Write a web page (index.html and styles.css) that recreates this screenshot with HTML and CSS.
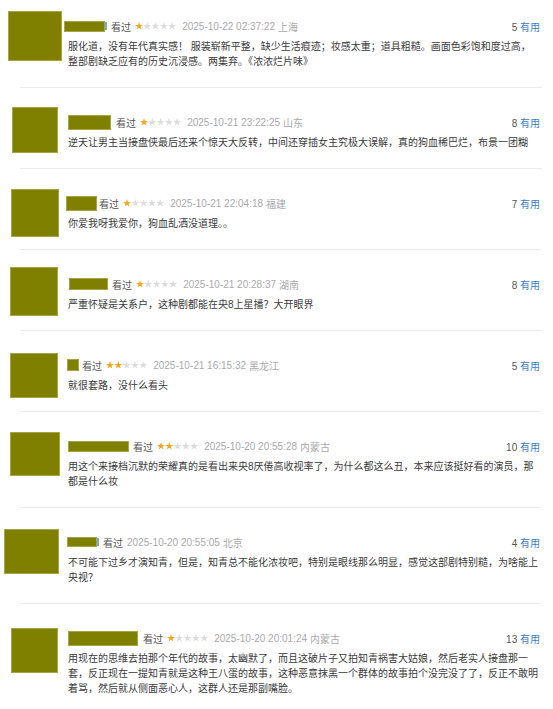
FILE: index.html
```html
<!DOCTYPE html>
<html lang="zh-CN">
<head>
  <meta charset="UTF-8">
  <title>短评</title>
  <link rel="stylesheet" href="styles.css">
</head>
<body>
  <div class="list">

    <div class="review">
      <div class="row">
        <div class="avatar-cell"><div class="avatar"></div></div>
        <div class="body">
          <div class="meta">
            <span class="name"></span><span class="tail"></span>
            <span class="status">看过</span>
            <span class="stars s1"><i></i><i></i><i></i><i></i><i></i></span>
            <span class="time">2025-10-22 02:37:22</span>
            <span class="loc">上海</span>
            <span class="votes"><b>5</b> <a>有用</a></span>
          </div>
          <p class="text">服化道，没有年代真实感！ 服装崭新平整，缺少生活痕迹；妆感太重；道具粗糙。画面色彩饱和度过高，<br>整部剧缺乏应有的历史沉浸感。两集弃。《浓浓烂片味》</p>
        </div>
      </div>
    </div>

    <div class="review">
      <div class="row">
        <div class="avatar-cell"><div class="avatar"></div></div>
        <div class="body">
          <div class="meta">
            <span class="name"></span>
            <span class="status">看过</span>
            <span class="stars s1"><i></i><i></i><i></i><i></i><i></i></span>
            <span class="time">2025-10-21 23:22:25</span>
            <span class="loc">山东</span>
            <span class="votes"><b>8</b> <a>有用</a></span>
          </div>
          <p class="text">逆天让男主当接盘侠最后还来个惊天大反转，中间还穿插女主究极大误解，真的狗血稀巴烂，布景一团糊</p>
        </div>
      </div>
    </div>

    <div class="review">
      <div class="row">
        <div class="avatar-cell"><div class="avatar"></div></div>
        <div class="body">
          <div class="meta">
            <span class="name"></span>
            <span class="status">看过</span>
            <span class="stars s1"><i></i><i></i><i></i><i></i><i></i></span>
            <span class="time">2025-10-21 22:04:18</span>
            <span class="loc">福建</span>
            <span class="votes"><b>7</b> <a>有用</a></span>
          </div>
          <p class="text">你爱我呀我爱你，狗血乱洒没道理。。</p>
        </div>
      </div>
    </div>

    <div class="review">
      <div class="row">
        <div class="avatar-cell"><div class="avatar"></div></div>
        <div class="body">
          <div class="meta">
            <span class="name"></span>
            <span class="status">看过</span>
            <span class="stars s1"><i></i><i></i><i></i><i></i><i></i></span>
            <span class="time">2025-10-21 20:28:37</span>
            <span class="loc">湖南</span>
            <span class="votes"><b>8</b> <a>有用</a></span>
          </div>
          <p class="text">严重怀疑是关系户，这种剧都能在央8上星播？大开眼界</p>
        </div>
      </div>
    </div>

    <div class="review">
      <div class="row">
        <div class="avatar-cell"><div class="avatar"></div></div>
        <div class="body">
          <div class="meta">
            <span class="name"></span>
            <span class="status">看过</span>
            <span class="stars s2"><i></i><i></i><i></i><i></i><i></i></span>
            <span class="time">2025-10-21 16:15:32</span>
            <span class="loc">黑龙江</span>
            <span class="votes"><b>5</b> <a>有用</a></span>
          </div>
          <p class="text">就很套路，没什么看头</p>
        </div>
      </div>
    </div>

    <div class="review">
      <div class="row">
        <div class="avatar-cell"><div class="avatar"></div></div>
        <div class="body">
          <div class="meta">
            <span class="name"></span>
            <span class="status">看过</span>
            <span class="stars s2"><i></i><i></i><i></i><i></i><i></i></span>
            <span class="time">2025-10-20 20:55:28</span>
            <span class="loc">内蒙古</span>
            <span class="votes"><b>10</b> <a>有用</a></span>
          </div>
          <p class="text">用这个来接档沉默的荣耀真的是看出来央8厌倦高收视率了，为什么都这么丑，本来应该挺好看的演员，那<br>都是什么妆</p>
        </div>
      </div>
    </div>

    <div class="review">
      <div class="row">
        <div class="avatar-cell"><div class="avatar"></div></div>
        <div class="body">
          <div class="meta">
            <span class="name"></span><span class="tail"></span>
            <span class="status">看过</span>
            <span class="time">2025-10-20 20:55:05</span>
            <span class="loc">北京</span>
            <span class="votes"><b>4</b> <a>有用</a></span>
          </div>
          <p class="text">不可能下过乡才演知青，但是，知青总不能化浓妆吧，特别是眼线那么明显，感觉这部剧特别糙，为啥能上<br>央视？</p>
        </div>
      </div>
    </div>

    <div class="review">
      <div class="row">
        <div class="avatar-cell"><div class="avatar"></div></div>
        <div class="body">
          <div class="meta">
            <span class="name"></span>
            <span class="status">看过</span>
            <span class="stars s1"><i></i><i></i><i></i><i></i><i></i></span>
            <span class="time">2025-10-20 20:01:24</span>
            <span class="loc">内蒙古</span>
            <span class="votes"><b>13</b> <a>有用</a></span>
          </div>
          <p class="text">用现在的思维去拍那个年代的故事，太幽默了，而且这破片子又拍知青祸害大姑娘，然后老实人接盘那一<br>套，反正现在一提知青就是这种王八蛋的故事，这种恶意抹黑一个群体的故事拍个没完没了了，反正不敢明<br>着骂，然后就从侧面恶心人，这群人还是那副嘴脸。</p>
        </div>
      </div>
    </div>

  </div>
</body>
</html>
```

FILE: styles.css
```css
body {
  margin: 0;
  background: #fff;
  font-family: "Liberation Sans", "Noto Sans CJK SC", sans-serif;
  font-size: 10px;
  color: #3b3b3b;
  overflow: hidden;
}
.list {
  margin-top: -8px;
}
.review::after {
  content: "";
  display: block;
  height: 1px;
  margin: 0 11px 0 20px;
  background: #ececec;
}
.row {
  display: flex;
}
.avatar-cell {
  width: 68px;
  height: 62px;
  flex-shrink: 0;
}
.avatar {
  background: #808000;
  box-shadow: inset 0 0 0 1px #a6a646;
}
.body {
  flex: 1;
  padding: 26px 13px 18px 0;
  min-width: 0;
}
.meta {
  display: flex;
  align-items: center;
  height: 16px;
  white-space: nowrap;
}
.name {
  display: inline-block;
  background: #808000;
  box-shadow: inset 0 0 0 1px #a6a646;
  margin-right: 4px;
}
.tail {
  display: inline-block;
  width: 2px;
  height: 8px;
  margin: 0 4px 0 -4px;
  background: #7fa6cf;
}
.status {
  color: #555;
  margin-right: 4px;
}
.stars {
  display: inline-flex;
  gap: 0.3px;
  margin-right: 6px;
}
.stars i {
  display: block;
  width: 8px;
  height: 8px;
  background: #dcdcdc;
  clip-path: polygon(50% 0%, 62% 36%, 100% 36%, 69% 58%, 81% 95%, 50% 72%, 19% 95%, 31% 58%, 0% 36%, 38% 36%);
}
.s1 i:nth-child(-n+1),
.s2 i:nth-child(-n+2) {
  background: #f9a31a;
}
.time,
.loc {
  color: #aaa;
}
.loc {
  margin-left: 3px;
}
.votes {
  margin-left: auto;
}
.votes b {
  font-weight: normal;
  color: #555;
}
.votes a {
  color: #3d80c4;
}
.text {
  margin: 5px 0 0;
  line-height: 15px;
  white-space: nowrap;
}

/* redacted avatars and names, one per review */
.review:nth-child(1) .avatar { margin: 19px 0 0 8px; width: 54px; height: 50px; }
.review:nth-child(2) .avatar { margin: 19px 0 0 12px; width: 46px; height: 46px; }
.review:nth-child(3) .avatar { margin: 20px 0 0 11px; width: 48px; height: 48px; }
.review:nth-child(4) .avatar { margin: 17px 0 0 10px; width: 48px; height: 49px; }
.review:nth-child(5) .avatar { margin: 22px 0 0 10px; width: 48px; height: 45px; }
.review:nth-child(6) .avatar { margin: 20px 0 0 10px; width: 50px; height: 44px; }
.review:nth-child(7) .avatar { margin: 21px 0 0 4px; width: 55px; height: 45px; }
.review:nth-child(8) .avatar { margin: 24px 0 0 11px; width: 47px; height: 45px; }

.review:nth-child(1) .name { width: 41px; height: 11px; margin-left: -4px; }
.review:nth-child(2) .name { width: 43px; height: 15px; margin-right: 5px; }
.review:nth-child(3) .name { width: 31px; height: 15px; margin-left: -2px; margin-right: 2px; }
.review:nth-child(4) .name { width: 39px; height: 12px; margin-left: 1px; }
.review:nth-child(5) .name { width: 12px; height: 12px; margin-left: -1px; margin-right: 3px; }
.review:nth-child(6) .name { width: 61px; height: 11px; }
.review:nth-child(7) .name { width: 30px; height: 10px; margin-left: -1px; }
.review:nth-child(8) .name { width: 70px; height: 15px; margin-right: 5px; }
```
